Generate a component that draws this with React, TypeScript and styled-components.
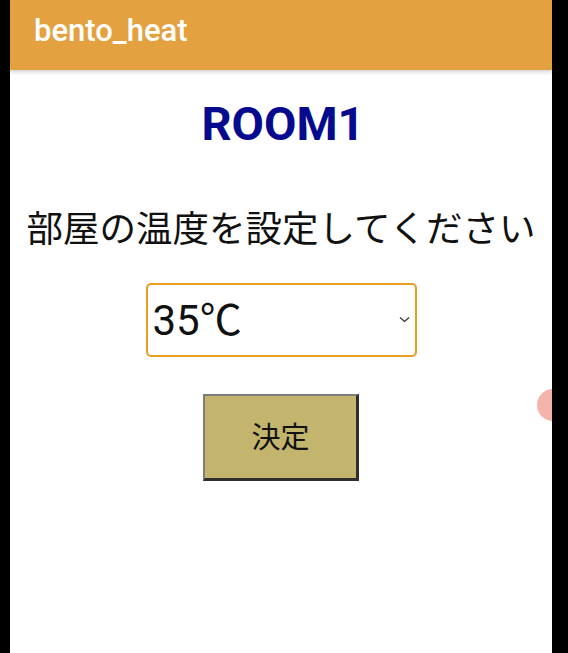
import React from "react";
import styled, { createGlobalStyle } from "styled-components";

const GlobalStyle = createGlobalStyle`
  html, body {
    margin: 0;
    padding: 0;
    background: #000;
    height: 100%;
  }
  #root { height: 100%; }
`;

const Screen = styled.div`
  position: relative;
  margin-left: 10px;
  width: 542px;
  height: 653px;
  background: #fff;
  overflow: hidden;
  display: flex;
  flex-direction: column;
  font-family: Roboto, "Noto Sans CJK JP", sans-serif;
`;

const AppBar = styled.header`
  height: 70px;
  flex: none;
  background: #e4a13f;
  display: flex;
  align-items: center;
  padding-left: 24px;
  box-shadow: 0 2px 4px rgba(0, 0, 0, 0.18);
  z-index: 1;
`;

const AppTitle = styled.h1`
  margin: 0 0 10px;
  font-family: Roboto, sans-serif;
  font-weight: 500;
  font-size: 31px;
  color: #fff;
`;

const Content = styled.main`
  display: flex;
  flex-direction: column;
  align-items: center;
  padding-top: 28px;
`;

const Room = styled.h2`
  margin: 0;
  padding-left: 4px;
  font-family: Roboto, sans-serif;
  font-weight: 700;
  font-size: 47px;
  line-height: 52px;
  color: #060a8c;
`;

const Prompt = styled.p`
  margin: 52px 0 0;
  font-family: "Noto Sans CJK JP", sans-serif;
  font-size: 36.5px;
  line-height: 50px;
  color: #111;
`;

const SelectWrap = styled.div`
  position: relative;
  margin-top: 31px;
  width: 271px;
  height: 74px;
`;

const Select = styled.select`
  appearance: none;
  -webkit-appearance: none;
  width: 100%;
  height: 100%;
  box-sizing: border-box;
  border: 2px solid #e89e22;
  border-radius: 5px;
  background: #fff;
  padding: 0 30px 0 5px;
  font-family: Roboto, "Noto Sans CJK JP", sans-serif;
  font-size: 42px;
  color: #111;
  outline: none;
`;

const Chevron = styled.svg`
  position: absolute;
  right: 7px;
  top: 33px;
  width: 11px;
  height: 7px;
  pointer-events: none;
`;

const Button = styled.button`
  margin-top: 37px;
  width: 156px;
  height: 87px;
  box-sizing: border-box;
  background: #c3b56d;
  border-style: solid;
  border-width: 2px 3px 3px 2px;
  border-color: #7d7d7d #2e2e2e #2e2e2e #7d7d7d;
  font-family: "Noto Sans CJK JP", sans-serif;
  font-size: 29px;
  color: #111;
  padding: 0 0 4px;
`;

const Bubble = styled.div`
  position: absolute;
  right: -17px;
  top: 389px;
  width: 32px;
  height: 32px;
  border-radius: 50%;
  background: #f5b4a9;
`;

export default function App() {
  return (
    <>
      <GlobalStyle />
      <Screen>
        <AppBar>
          <AppTitle>bento_heat</AppTitle>
        </AppBar>
        <Content>
          <Room>ROOM1</Room>
          <Prompt>部屋の温度を設定してください</Prompt>
          <SelectWrap>
            <Select defaultValue="35">
              <option value="30">30℃</option>
              <option value="35">35℃</option>
              <option value="40">40℃</option>
            </Select>
            <Chevron viewBox="0 0 11 7">
              <path d="M1 1.5 L5.5 5.5 L10 1.5" fill="none" stroke="#333" strokeWidth="1.3" />
            </Chevron>
          </SelectWrap>
          <Button>決定</Button>
        </Content>
        <Bubble />
      </Screen>
    </>
  );
}
